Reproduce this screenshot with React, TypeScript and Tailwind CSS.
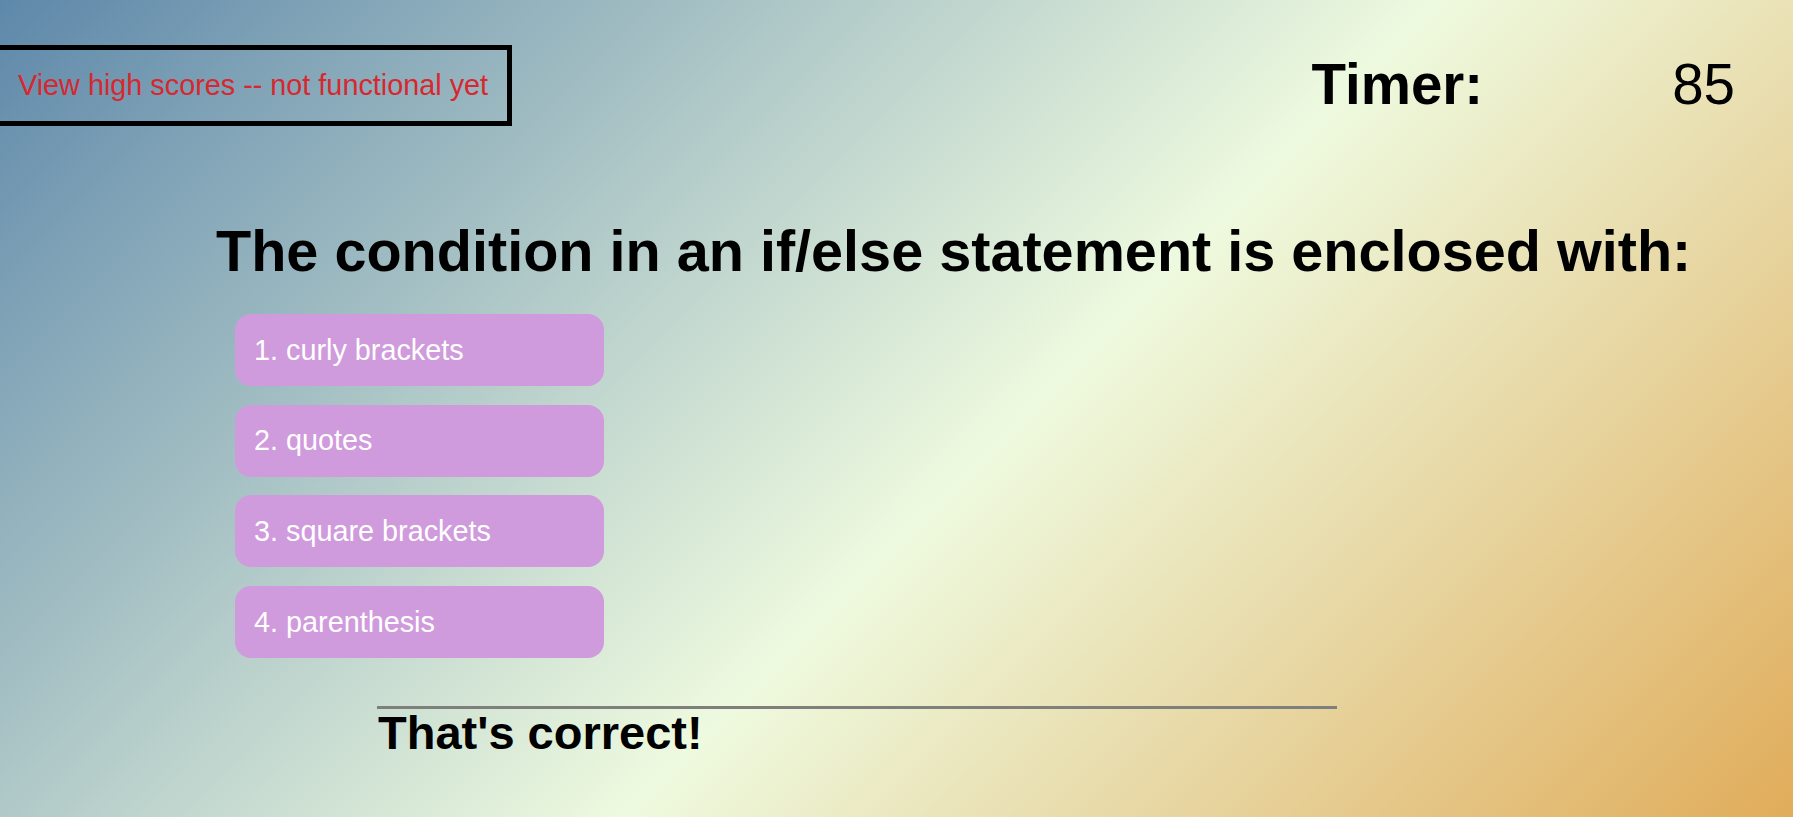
import React from "react";

const answers = ["1. curly brackets", "2. quotes", "3. square brackets", "4. parenthesis"];

export default function App() {
  return (
    <div
      className="w-full h-[817px] overflow-hidden flex flex-col bg-[linear-gradient(135deg,#5e88aa_0%,#eefadf_55%,#e0ac5a_100%)] text-black"
      style={{ fontFamily: '"Liberation Sans", Arial, sans-serif' }}
    >
      <header className="flex items-start justify-between">
        <div className="mt-[45px] -ml-[6px] border-[5px] border-black px-[19px] py-[19px] text-[28.8px] leading-[33px] text-[#d8272f]">
          View high scores -- not functional yet
        </div>
        <div className="mt-[53px] mr-[58px] flex items-start text-[56.5px] leading-[64px]">
          <span className="font-bold">Timer:</span>
          <span className="ml-[189px]">85</span>
        </div>
      </header>

      <main className="flex flex-col">
        <h1 className="mt-[92px] ml-[216px] text-[57.6px] leading-[66px] font-bold">
          The condition in an if/else statement is enclosed with:
        </h1>
        <div className="mt-[30px] ml-[235px] flex flex-col gap-[18.7px]">
          {answers.map((a) => (
            <button
              key={a}
              className="w-[369px] h-[72px] rounded-[16px] bg-[#cf9bdc] px-[19px] text-left text-[28.8px] leading-[33px] text-white"
            >
              {a}
            </button>
          ))}
        </div>
        <div className="mt-[48px] ml-[377px] w-[960px] flex flex-col">
          <div className="h-[3px] bg-[#7f7f7b]" />
          <div className="text-[47px] leading-[47px] font-bold ml-[1px]">That's correct!</div>
        </div>
      </main>
    </div>
  );
}
